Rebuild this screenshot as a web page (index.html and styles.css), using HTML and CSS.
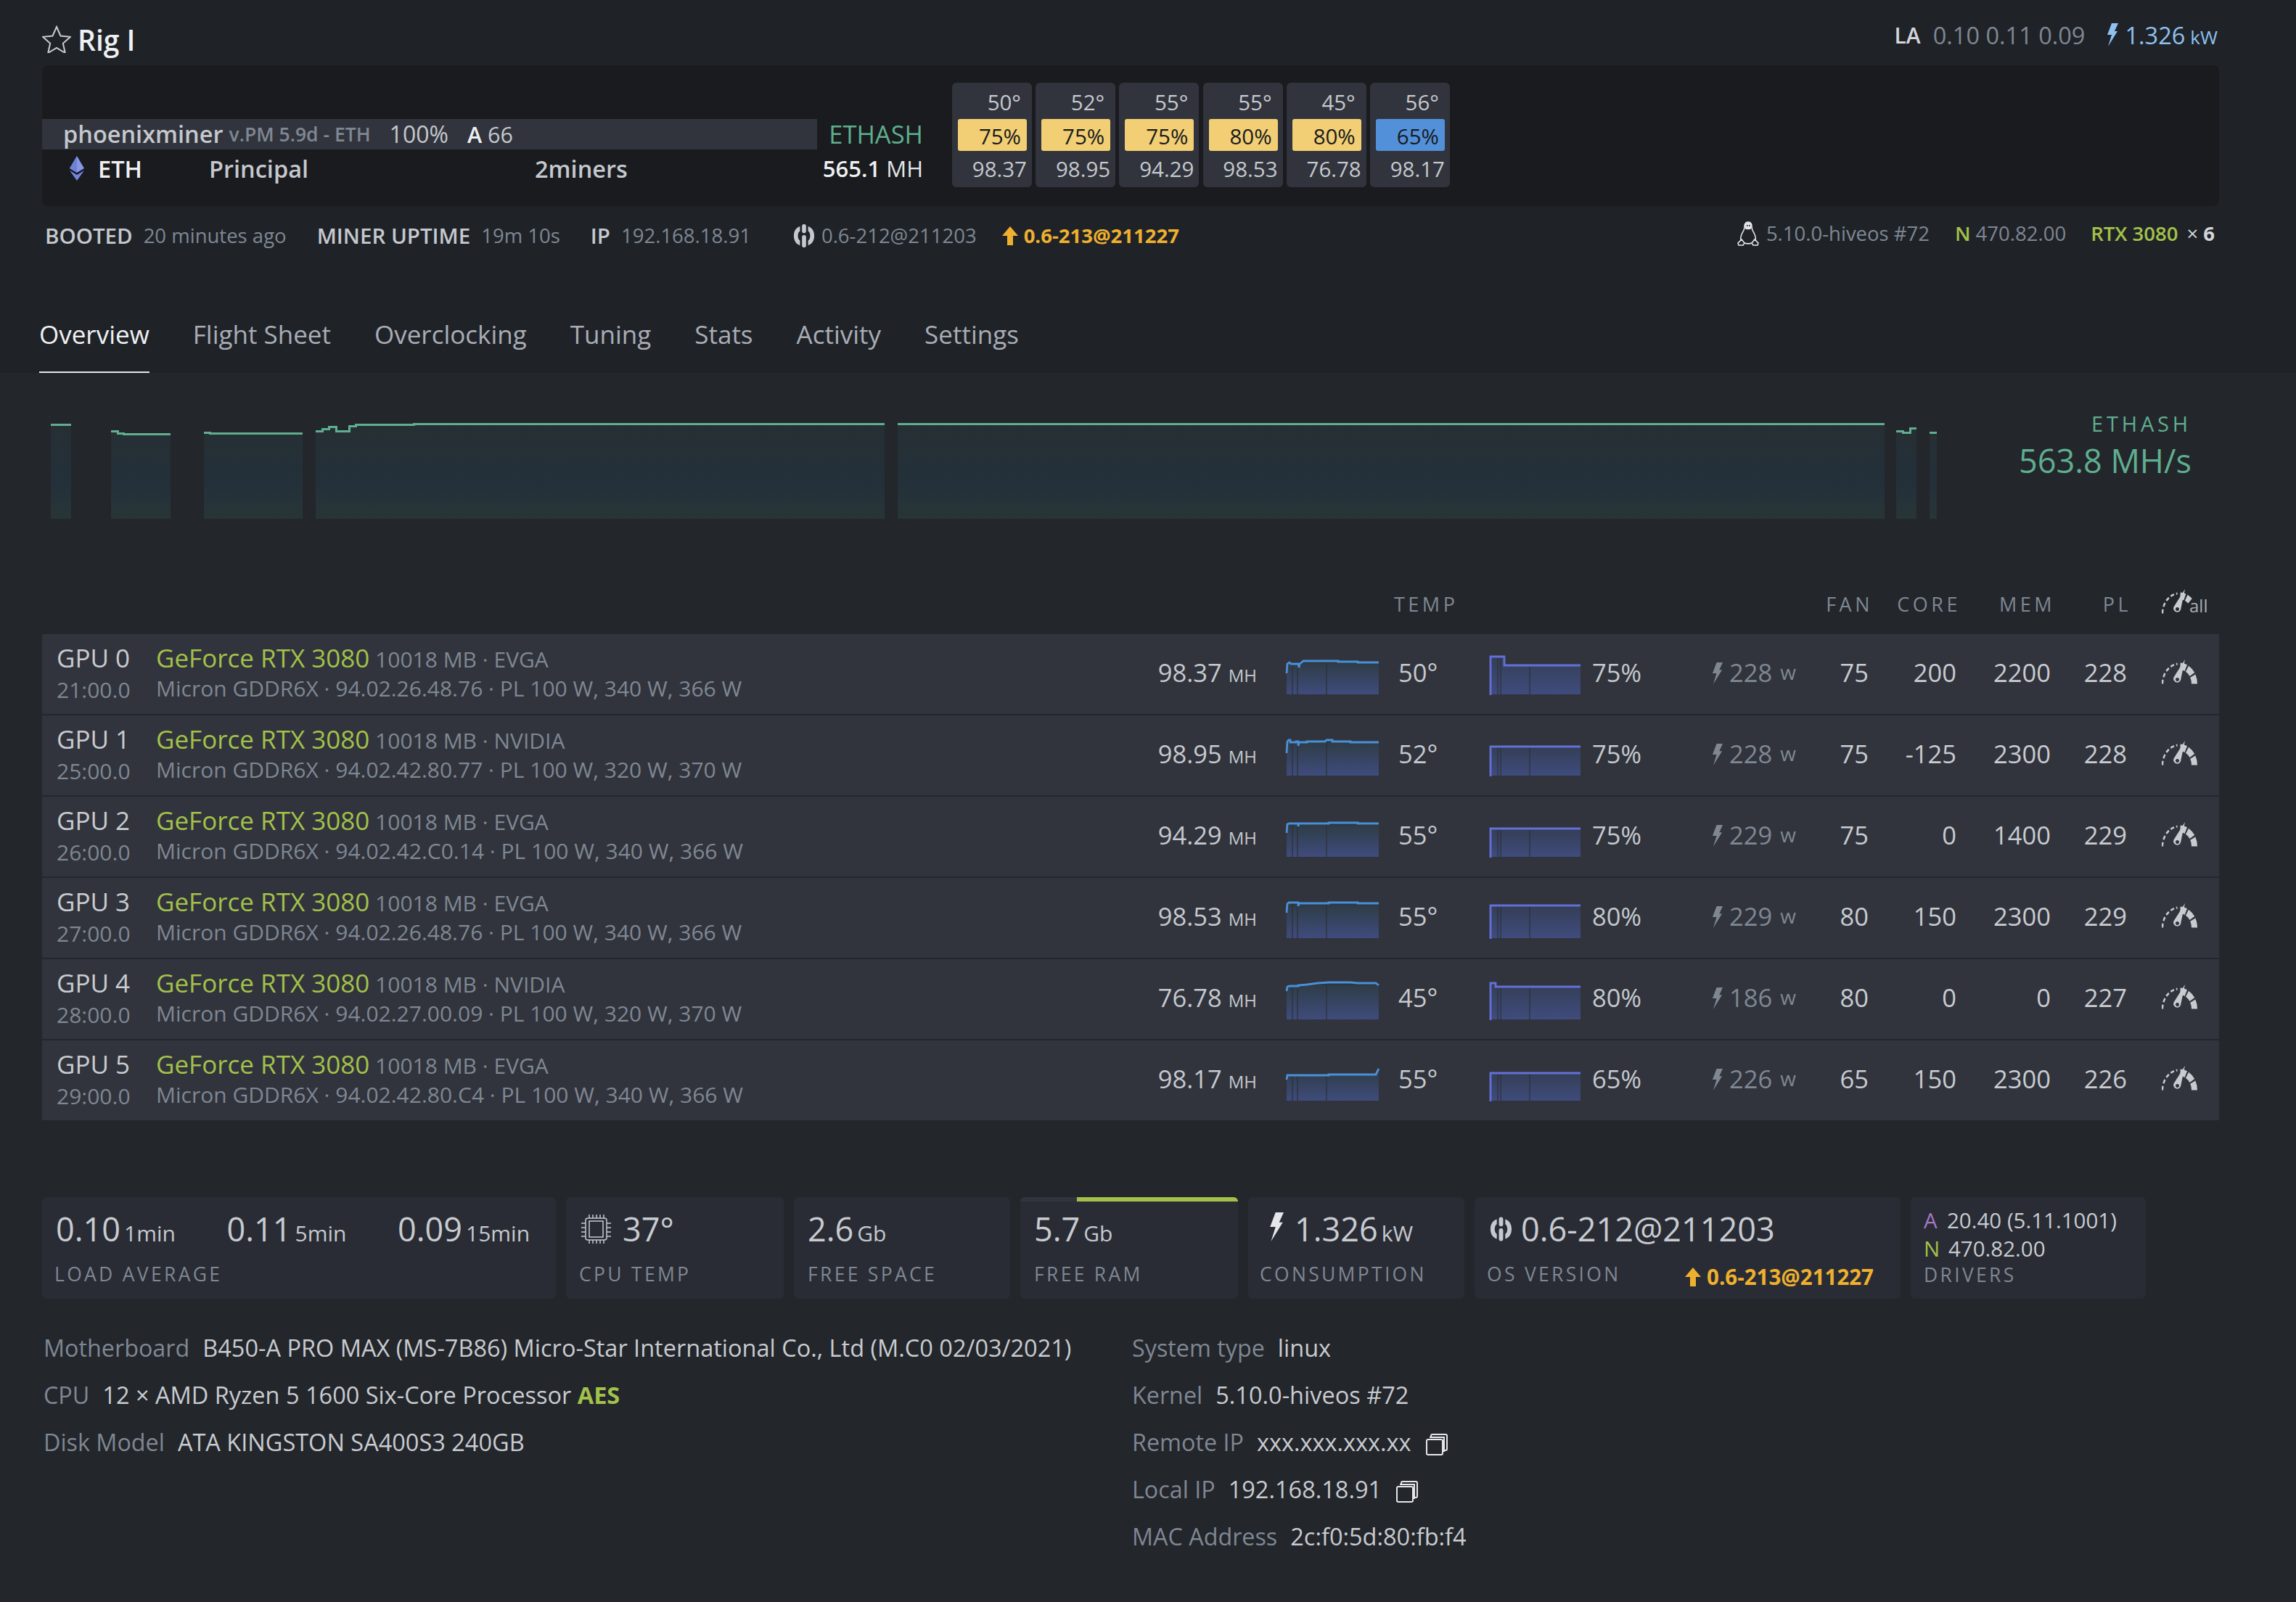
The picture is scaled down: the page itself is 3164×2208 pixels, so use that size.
FILE: index.html
```html
<!DOCTYPE html>
<html lang="en">
<head>
<meta charset="utf-8">
<title>Rig I</title>
<link rel="stylesheet" href="styles.css">
</head>
<body>
<svg class="defs" width="0" height="0" aria-hidden="true">
  <defs>
    <linearGradient id="gh" x1="0" y1="0" x2="0" y2="1"><stop offset="0" stop-color="#27313a"/><stop offset="0.1" stop-color="#2f3d49"/><stop offset="1" stop-color="#3f4c7d"/></linearGradient>
    <linearGradient id="gf" x1="0" y1="0" x2="0" y2="1"><stop offset="0" stop-color="#343e56"/><stop offset="1" stop-color="#3f4c7d"/></linearGradient>
    <linearGradient id="gc" x1="0" y1="0" x2="0" y2="1"><stop offset="0" stop-color="#262f33"/><stop offset="0.62" stop-color="#23303a"/><stop offset="1" stop-color="#283537"/></linearGradient>
    <symbol id="bolt" viewBox="0 0 16 32"><path d="M7 0h9l-5 11h4L2 32l5-16H1z"/></symbol>
    <symbol id="hive" viewBox="0 0 32 34"><path d="M10 3C4 5 1 10 1 17s3 12 9 14v-7c-2-1-3-4-3-7s1-6 3-7zM22 3c6 2 9 7 9 14s-3 12-9 14v-7c2-1 3-4 3-7s-1-6-3-7z"/><rect x="13" y="0" width="6" height="13" rx="3"/><rect x="13" y="16" width="6" height="18" rx="3"/></symbol>
    <symbol id="arrow" viewBox="0 0 24 26"><path d="M12 0l11 13h-7v13H8V13H1z"/></symbol>
    <symbol id="gauge" viewBox="0 0 49 34">
      <g transform="translate(24.500 33.500) scale(1 1.180)" fill="none" stroke="currentColor">
        <path d="M-23.500 0A23.500 23.500 0 0 1-3-23.300" stroke-width="2.400" stroke-dasharray="5 3"/>
        <path d="M20.500 0A20.500 20.500 0 0 0 1-20.500" stroke-width="8" stroke-dasharray="9.500 2"/>
      </g>
      <path fill-rule="evenodd" d="M32 0L26.500 26A5.200 5.200 0 1 1 16.500 24.500ZM21.500 25a2.500 2.500 0 1 0 .01 0z"/>
    </symbol>
    <symbol id="gauge-all" viewBox="0 0 49 34">
      <g transform="translate(24.500 33.500) scale(1 1.180)" fill="none" stroke="currentColor">
        <path d="M-23.500 0A23.500 23.500 0 0 1-3-23.300" stroke-width="2.400" stroke-dasharray="5 3"/>
        <path d="M14.500 -14.500A20.500 20.500 0 0 0 1-20.500" stroke-width="8" stroke-dasharray="6.500 2"/>
      </g>
      <path fill-rule="evenodd" d="M32 0L26.500 26A5.200 5.200 0 1 1 16.500 24.500ZM21.500 25a2.500 2.500 0 1 0 .01 0z"/>
    </symbol>
    <symbol id="copy" viewBox="0 0 30 30"><rect x="1" y="8" width="22" height="21" rx="2" fill="none" stroke="currentColor" stroke-width="2"/><path d="M7 4V3a2 2 0 0 1 2-2h18a2 2 0 0 1 2 2v18a2 2 0 0 1-2 2h-1" fill="none" stroke="currentColor" stroke-width="2"/><path d="M5 5h20v20" fill="none" stroke="currentColor" stroke-width="2"/></symbol>
  </defs>
</svg>

<header class="head">
  <div class="topbar">
    <div class="title">
      <svg class="star" viewBox="0 0 40 38"><path d="M20 2l5.500 12.500 13.500 1.300-10.200 9 3 13.200L20 31l-11.800 7 3-13.200L1 15.800l13.500-1.300z" fill="none" stroke="#c8cbd0" stroke-width="2"/></svg>
      <span>Rig I</span>
    </div>
    <div class="top-right">
      <b class="la">LA</b>
      <span class="muted">0.10 0.11 0.09</span>
      <svg class="bolt-top"><use href="#bolt"/></svg>
      <span class="power-top">1.326<small>kW</small></span>
    </div>
  </div>

  <section class="panel">
    <div class="miner">
      <div class="miner-band">
        <b class="miner-name">phoenixminer</b>
        <span class="miner-ver">v.PM 5.9d - ETH</span>
        <span class="miner-pct">100%</span>
        <span class="miner-acc"><b>A</b> 66</span>
      </div>
      <div class="miner-coin">
        <svg class="eth" viewBox="0 0 22 34"><path d="M11 0L1 17l10 6 10-6z" fill="#8797e6"/><path d="M11 0L1 17l10 6z" fill="#6f80d8"/><path d="M1 20l10 14 10-14-10 6z" fill="#7485de"/></svg>
        <b class="coin-name">ETH</b>
        <span class="coin-wallet">Principal</span>
        <span class="coin-pool">2miners</span>
      </div>
    </div>
    <div class="algo">
      <div class="algo-name">ETHASH</div>
      <div class="algo-rate"><b>565.1</b> <span>MH</span></div>
    </div>
    <div class="cards">
      <div class="card"><span class="card-t">50°</span><span class="card-f warm">75%</span><span class="card-h">98.37</span></div>
      <div class="card"><span class="card-t">52°</span><span class="card-f warm">75%</span><span class="card-h">98.95</span></div>
      <div class="card"><span class="card-t">55°</span><span class="card-f warm">75%</span><span class="card-h">94.29</span></div>
      <div class="card"><span class="card-t">55°</span><span class="card-f warm">80%</span><span class="card-h">98.53</span></div>
      <div class="card"><span class="card-t">45°</span><span class="card-f warm">80%</span><span class="card-h">76.78</span></div>
      <div class="card"><span class="card-t">56°</span><span class="card-f cool">65%</span><span class="card-h">98.17</span></div>
    </div>
  </section>

  <div class="meta">
    <div class="meta-left">
      <b class="k">BOOTED</b><span class="v g1">20 minutes ago</span>
      <b class="k">MINER UPTIME</b><span class="v g1">19m 10s</span>
      <b class="k">IP</b><span class="v g2">192.168.18.91</span>
      <svg class="hive-s"><use href="#hive"/></svg><span class="v g3">0.6-212@211203</span>
      <svg class="arrow-s"><use href="#arrow"/></svg><b class="update">0.6-213@211227</b>
    </div>
    <div class="meta-right">
      <svg class="tux" viewBox="0 0 30 34"><path d="M15 1c-4 0-5 3-5 7 0 3-1 5-3 8-2 4-3 7-2 10 1 2 3 3 5 4 3 1 7 1 10 0 2-1 4-2 5-4 1-3 0-6-2-10-2-3-3-5-3-8 0-4-1-7-5-7z" fill="#1f2328" stroke="#e4e6e9" stroke-width="1.600"/><path d="M11 2.500c1-1.500 7-1.500 8 0 1 2 1 6 0 8-2 1-6 1-8 0-1-2-1-6 0-8z" fill="#e4e6e9"/><path d="M13 5h1.500v2H13zM16 5h1.500v2H16z" fill="#1f2328"/><path d="M1 30l5-5 4 5-2 3-6 0zM29 30l-5-5-4 5 2 3 6 0z" fill="#1f2328" stroke="#e4e6e9" stroke-width="1.600"/></svg>
      <span class="v g4">5.10.0-hiveos #72</span>
      <span class="green n-tag">N</span><span class="v g5">470.82.00</span>
      <span class="green rtx">RTX 3080</span><b class="times"><small>×</small> 6</b>
    </div>
  </div>

  <nav class="tabs">
    <a class="tab active">Overview</a>
    <a class="tab">Flight Sheet</a>
    <a class="tab">Overclocking</a>
    <a class="tab">Tuning</a>
    <a class="tab">Stats</a>
    <a class="tab">Activity</a>
    <a class="tab">Settings</a>
  </nav>
</header>

<main class="main">
  <section class="chart-row">
    <svg class="chart" viewBox="0 0 2640 136" width="2640" height="136">
      <path fill="url(#gc)" d="M12 5H40V135H12zM95 14H104V17H112V18H177V135H95zM223 16H231V17H359V135H223zM377 14H386V11H395V8H405V14H423V7H432V5H512V4H1161V135H377zM1179 4H2539V135H1179zM2555 14H2564V16H2574V10H2583V135H2555zM2601 16H2611V135H2601z"/>
      <path fill="none" stroke="#5fae8f" stroke-width="3" shape-rendering="crispEdges" d="M12 5H40M95 14H104V17H112V18H177M223 16H231V17H359M377 14H386V11H395V8H405V14H423V7H432V5H512V4H1161M1179 4H2539M2555 14H2564V16H2574V10H2583M2601 16H2611"/>
    </svg>
    <div class="chart-info">
      <div class="chart-algo">ETHASH</div>
      <div class="chart-rate">563.8 MH/s</div>
    </div>
  </section>

  <section class="gpus">
    <div class="gpu-head grid">
      <span class="h-temp">TEMP</span>
      <span class="h-fan">FAN</span>
      <span class="h-core">CORE</span>
      <span class="h-mem">MEM</span>
      <span class="h-pl">PL</span>
      <span class="h-all"><svg class="gauge"><use href="#gauge-all"/></svg><small>all</small></span>
    </div>

    <div class="gpu grid">
      <div class="gpu-id"><div class="gid">GPU 0</div><div class="bus">21:00.0</div></div>
      <div class="gpu-info"><div><span class="model">GeForce RTX 3080</span> <span class="sub">10018 MB · EVGA</span></div><div class="sub">Micron GDDR6X · 94.02.26.48.76 · PL 100 W, 340 W, 366 W</div></div>
      <div class="hash">98.37 <small>MH</small></div>
      <div class="c-spark1"><svg class="spark" viewBox="0 0 130 54"><path fill="url(#gh)" d="M2 24L3 11L6 9L8 11H18L19 16L20 11L24 8L25 7H73V8H100V9H129V53H2z"/><path class="gaps" d="M10 12V53M17 12V53M57 8V53"/><path class="lh" d="M2 24L3 11L6 9L8 11H18L19 16L20 11L24 8L25 7H73V8H100V9H129"/></svg></div>
      <div class="temp">50°</div>
      <div class="c-spark2"><svg class="spark" viewBox="0 0 130 54"><path fill="url(#gf)" d="M3 1H22V13H127V53H3z"/><path class="gaps" d="M13 3V53M17 3V53M57 13V53"/><path class="lf" d="M3 54V1H22V13H127"/></svg></div>
      <div class="fan">75%</div>
      <div class="power"><svg class="bolt-w"><use href="#bolt"/></svg><span>228</span><small>w</small></div>
      <div class="n f">75</div><div class="n c">200</div><div class="n m">2200</div><div class="n p">228</div>
      <div class="g"><svg class="gauge"><use href="#gauge"/></svg></div>
    </div>

    <div class="gpu grid">
      <div class="gpu-id"><div class="gid">GPU 1</div><div class="bus">25:00.0</div></div>
      <div class="gpu-info"><div><span class="model">GeForce RTX 3080</span> <span class="sub">10018 MB · NVIDIA</span></div><div class="sub">Micron GDDR6X · 94.02.42.80.77 · PL 100 W, 320 W, 370 W</div></div>
      <div class="hash">98.95 <small>MH</small></div>
      <div class="c-spark1"><svg class="spark" viewBox="0 0 130 54"><path fill="url(#gh)" d="M2 22L3 6L5 4H7V7H15V6H18V12L19 7H30V6H55L57 4H65V6H90V7H129V53H2z"/><path class="gaps" d="M10 8V53M17 8V53M57 6V53"/><path class="lh" d="M2 22L3 6L5 4H7V7H15V6H18V12L19 7H30V6H55L57 4H65V6H90V7H129"/></svg></div>
      <div class="temp">52°</div>
      <div class="c-spark2"><svg class="spark" viewBox="0 0 130 54"><path fill="url(#gf)" d="M3 13H127V53H3z"/><path class="gaps" d="M13 14V53M17 14V53M57 14V53"/><path class="lf" d="M3 54V13H127"/></svg></div>
      <div class="fan">75%</div>
      <div class="power"><svg class="bolt-w"><use href="#bolt"/></svg><span>228</span><small>w</small></div>
      <div class="n f">75</div><div class="n c">-125</div><div class="n m">2300</div><div class="n p">228</div>
      <div class="g"><svg class="gauge"><use href="#gauge"/></svg></div>
    </div>

    <div class="gpu grid">
      <div class="gpu-id"><div class="gid">GPU 2</div><div class="bus">26:00.0</div></div>
      <div class="gpu-info"><div><span class="model">GeForce RTX 3080</span> <span class="sub">10018 MB · EVGA</span></div><div class="sub">Micron GDDR6X · 94.02.42.C0.14 · PL 100 W, 340 W, 366 W</div></div>
      <div class="hash">94.29 <small>MH</small></div>
      <div class="c-spark1"><svg class="spark" viewBox="0 0 130 54"><path fill="url(#gh)" d="M2 20L3 8L6 7H18V11L19 7H60V6H100V7H129V53H2z"/><path class="gaps" d="M10 8V53M17 8V53M57 8V53"/><path class="lh" d="M2 20L3 8L6 7H18V11L19 7H60V6H100V7H129"/></svg></div>
      <div class="temp">55°</div>
      <div class="c-spark2"><svg class="spark" viewBox="0 0 130 54"><path fill="url(#gf)" d="M3 14H127V53H3z"/><path class="gaps" d="M13 15V53M17 15V53M57 15V53"/><path class="lf" d="M3 54V14H127"/></svg></div>
      <div class="fan">75%</div>
      <div class="power"><svg class="bolt-w"><use href="#bolt"/></svg><span>229</span><small>w</small></div>
      <div class="n f">75</div><div class="n c">0</div><div class="n m">1400</div><div class="n p">229</div>
      <div class="g"><svg class="gauge"><use href="#gauge"/></svg></div>
    </div>

    <div class="gpu grid">
      <div class="gpu-id"><div class="gid">GPU 3</div><div class="bus">27:00.0</div></div>
      <div class="gpu-info"><div><span class="model">GeForce RTX 3080</span> <span class="sub">10018 MB · EVGA</span></div><div class="sub">Micron GDDR6X · 94.02.26.48.76 · PL 100 W, 340 W, 366 W</div></div>
      <div class="hash">98.53 <small>MH</small></div>
      <div class="c-spark1"><svg class="spark" viewBox="0 0 130 54"><path fill="url(#gh)" d="M2 18L3 6L5 4H18V9L19 5H60V4H100V5H129V53H2z"/><path class="gaps" d="M10 6V53M17 6V53M57 6V53"/><path class="lh" d="M2 18L3 6L5 4H18V9L19 5H60V4H100V5H129"/></svg></div>
      <div class="temp">55°</div>
      <div class="c-spark2"><svg class="spark" viewBox="0 0 130 54"><path fill="url(#gf)" d="M3 8H127V53H3z"/><path class="gaps" d="M13 9V53M17 9V53M57 9V53"/><path class="lf" d="M3 54V8H127"/></svg></div>
      <div class="fan">80%</div>
      <div class="power"><svg class="bolt-w"><use href="#bolt"/></svg><span>229</span><small>w</small></div>
      <div class="n f">80</div><div class="n c">150</div><div class="n m">2300</div><div class="n p">229</div>
      <div class="g"><svg class="gauge"><use href="#gauge"/></svg></div>
    </div>

    <div class="gpu grid">
      <div class="gpu-id"><div class="gid">GPU 4</div><div class="bus">28:00.0</div></div>
      <div class="gpu-info"><div><span class="model">GeForce RTX 3080</span> <span class="sub">10018 MB · NVIDIA</span></div><div class="sub">Micron GDDR6X · 94.02.27.00.09 · PL 100 W, 320 W, 370 W</div></div>
      <div class="hash">76.78 <small>MH</small></div>
      <div class="c-spark1"><svg class="spark" viewBox="0 0 130 54"><path fill="url(#gh)" d="M2 14L3 8L6 7H18V6L30 5L45 3L60 2H90L100 3H125L129 6V53H2z"/><path class="gaps" d="M10 9V53M17 9V53M57 5V53"/><path class="lh" d="M2 14L3 8L6 7H18V6L30 5L45 3L60 2H90L100 3H125L129 6"/></svg></div>
      <div class="temp">45°</div>
      <div class="c-spark2"><svg class="spark" viewBox="0 0 130 54"><path fill="url(#gf)" d="M3 3H10V8H127V53H3z"/><path class="gaps" d="M13 9V53M17 9V53M57 9V53"/><path class="lf" d="M3 54V3H10V8H127"/></svg></div>
      <div class="fan">80%</div>
      <div class="power"><svg class="bolt-w"><use href="#bolt"/></svg><span>186</span><small>w</small></div>
      <div class="n f">80</div><div class="n c">0</div><div class="n m">0</div><div class="n p">227</div>
      <div class="g"><svg class="gauge"><use href="#gauge"/></svg></div>
    </div>

    <div class="gpu grid">
      <div class="gpu-id"><div class="gid">GPU 5</div><div class="bus">29:00.0</div></div>
      <div class="gpu-info"><div><span class="model">GeForce RTX 3080</span> <span class="sub">10018 MB · EVGA</span></div><div class="sub">Micron GDDR6X · 94.02.42.80.C4 · PL 100 W, 340 W, 366 W</div></div>
      <div class="hash">98.17 <small>MH</small></div>
      <div class="c-spark1"><svg class="spark" viewBox="0 0 130 54"><path fill="url(#gh)" d="M2 24L3 18H60V17H125L126 15L129 9V53H2z"/><path class="gaps" d="M10 19V53M17 19V53M57 19V53"/><path class="lh" d="M2 24L3 18H60V17H125L126 15L129 9"/></svg></div>
      <div class="temp">55°</div>
      <div class="c-spark2"><svg class="spark" viewBox="0 0 130 54"><path fill="url(#gf)" d="M3 15H127V53H3z"/><path class="gaps" d="M13 16V53M17 16V53M57 16V53"/><path class="lf" d="M3 54V15H127"/></svg></div>
      <div class="fan">65%</div>
      <div class="power"><svg class="bolt-w"><use href="#bolt"/></svg><span>226</span><small>w</small></div>
      <div class="n f">65</div><div class="n c">150</div><div class="n m">2300</div><div class="n p">226</div>
      <div class="g"><svg class="gauge"><use href="#gauge"/></svg></div>
    </div>
  </section>

  <section class="stats">
    <div class="stat s-load">
      <div class="val">
        <span class="load"><b>0.10</b><small>1min</small></span>
        <span class="load"><b>0.11</b><small>5min</small></span>
        <span class="load"><b>0.09</b><small>15min</small></span>
      </div>
      <div class="lab">LOAD AVERAGE</div>
    </div>
    <div class="stat s-cpu">
      <div class="val">
        <svg class="chip" viewBox="0 0 43 42"><g fill="none" stroke="#c5c8ce" stroke-width="1.500"><rect x="7" y="6" width="29" height="30" rx="3"/><rect x="12" y="10" width="19" height="22"/><path d="M12 1v5M17 1v5M22 1v5M27 1v5M32 1v5M12 36v5M17 36v5M22 36v5M27 36v5M32 36v5M1 13h6M1 19h6M1 25h6M1 31h6M36 13h6M36 19h6M36 25h6M36 31h6"/></g></svg>
        <b>37°</b>
      </div>
      <div class="lab">CPU TEMP</div>
    </div>
    <div class="stat s-disk">
      <div class="val"><b>2.6</b><small>Gb</small></div>
      <div class="lab">FREE SPACE</div>
    </div>
    <div class="stat s-ram">
      <div class="ram-bar"><div class="ram-used"></div></div>
      <div class="val"><b>5.7</b><small>Gb</small></div>
      <div class="lab">FREE RAM</div>
    </div>
    <div class="stat s-pow">
      <div class="val"><svg class="bolt-stat"><use href="#bolt"/></svg><b>1.326</b><small>kW</small></div>
      <div class="lab">CONSUMPTION</div>
    </div>
    <div class="stat s-os">
      <div class="val"><svg class="hive-l"><use href="#hive"/></svg><b>0.6-212@211203</b></div>
      <div class="os-foot">
        <div class="lab">OS VERSION</div>
        <div class="os-up"><svg class="arrow-s"><use href="#arrow"/></svg><b class="update">0.6-213@211227</b></div>
      </div>
    </div>
    <div class="stat s-drv">
      <div class="drv"><span class="tag-a">A</span>20.40 (5.11.1001)</div>
      <div class="drv"><span class="tag-n">N</span>470.82.00</div>
      <div class="lab">DRIVERS</div>
    </div>
  </section>

  <section class="details">
    <div class="d-col d-left">
      <div class="d"><span class="dk">Motherboard</span><span class="dv">B450-A PRO MAX (MS-7B86) Micro-Star International Co., Ltd (M.C0 02/03/2021)</span></div>
      <div class="d"><span class="dk">CPU</span><span class="dv">12 × AMD Ryzen 5 1600 Six-Core Processor <b class="aes">AES</b></span></div>
      <div class="d"><span class="dk">Disk Model</span><span class="dv">ATA KINGSTON SA400S3 240GB</span></div>
    </div>
    <div class="d-col">
      <div class="d"><span class="dk">System type</span><span class="dv">linux</span></div>
      <div class="d"><span class="dk">Kernel</span><span class="dv">5.10.0-hiveos #72</span></div>
      <div class="d"><span class="dk">Remote IP</span><span class="dv">xxx.xxx.xxx.xx</span><svg class="copy"><use href="#copy"/></svg></div>
      <div class="d"><span class="dk">Local IP</span><span class="dv">192.168.18.91</span><svg class="copy"><use href="#copy"/></svg></div>
      <div class="d"><span class="dk">MAC Address</span><span class="dv">2c:f0:5d:80:fb:f4</span></div>
    </div>
  </section>
</main>
</body>
</html>
```

FILE: styles.css
```css
* { box-sizing: border-box; }
html, body { margin: 0; padding: 0; }
body {
  width: 3164px;
  height: 2208px;
  background: #23262b;
  color: #c5c8ce;
  font-family: "Open Sans", "Liberation Sans", sans-serif;
  font-size: 30px;
  overflow: hidden;
}
small { font-size: inherit; }
.defs { position: absolute; }
.muted { color: #7f8793; }
.green { color: #a3c14a; }

.head { background: #1f2328; height: 514px; }

.topbar {
  height: 90px;
  padding: 18px 108px 0 58px;
  display: flex;
  justify-content: space-between;
  align-items: center;
}
.title { display: flex; align-items: center; gap: 9px; font-size: 39px; font-weight: 600; color: #eef0f2; }
.star { width: 40px; height: 38px; }
.top-right { display: flex; align-items: center; font-size: 32.500px; margin-top: -12px; }
.la { color: #d4d6da; font-weight: 600; font-size: 30px; margin-right: 17px; }
.bolt-top { width: 16px; height: 32px; fill: #8fc1f0; margin: 0 9px 0 30px; }
.power-top { color: #8fc1f0; }
.power-top small { font-size: 26px; margin-left: 7px; }

.panel {
  margin-left: 58px;
  width: 3000px;
  height: 194px;
  background: #191b1e;
  border-radius: 8px;
  display: flex;
}
.miner { width: 1068px; padding-top: 74px; }
.miner-band {
  height: 42px;
  background: #31343c;
  padding-left: 29px;
  display: flex;
  align-items: center;
  font-size: 32px;
  line-height: 42px;
  white-space: nowrap;
}
.miner-name { font-weight: 600; font-size: 32.500px; color: #c5c8ce; }
.miner-ver { font-size: 26.500px; color: #7f8793; margin-left: 8px; font-weight: 600; }
.miner-pct { margin-left: 26px; font-size: 32px; }
.miner-acc { margin-left: 26px; font-size: 30.500px; }
.miner-acc b { color: #eef0f2; font-weight: 600; }
.miner-coin { display: flex; align-items: center; height: 52px; padding-left: 37px; font-size: 32.500px; font-weight: 600; white-space: nowrap; }
.eth { width: 22px; height: 34px; }
.coin-name { margin-left: 18px; color: #eef0f2; font-weight: 600; width: 153px; }
.coin-wallet { width: 449px; color: #c5c8ce; }
.coin-pool { color: #c5c8ce; }

.algo { width: 146px; padding-top: 74px; text-align: right; white-space: nowrap; }
.algo-name { color: #5fae8f; font-size: 34.500px; line-height: 42px; }
.algo-rate { line-height: 52px; font-size: 31px; color: #e4e6e9; }
.algo-rate b { font-weight: 600; color: #eef0f2; }

.cards { display: flex; gap: 5.200px; margin: 24px 0 0 40px; height: 144px; }
.card {
  width: 110px;
  height: 144px;
  background: #31343c;
  border-radius: 6px;
  padding: 0 7px 0 8px;
  display: flex;
  flex-direction: column;
  font-size: 29.500px;
  text-align: right;
}
.card-t { height: 50px; line-height: 53px; padding-right: 8px; }
.card-f {
  height: 44px;
  line-height: 48px;
  border-radius: 3px;
  color: #191b1e;
  padding-right: 8px;
}
.warm { background: #f2cf74; }
.cool { background: #5290d9; }
.card-h { height: 50px; line-height: 50px; }

.meta {
  height: 128px;
  padding: 20px 112px 0 62px;
  display: flex;
  justify-content: space-between;
  font-size: 27.500px;
  line-height: 40px;
  white-space: nowrap;
}
.meta-left, .meta-right { display: flex; align-items: center; height: 40px; }
.meta-left { margin-top: 1px; }
.meta-right { margin-top: -2px; }
.k { color: #c5c8ce; font-weight: 600; font-size: 29.500px; }
.v { color: #7f8793; }
.g1 { margin: 0 42px 0 15px; }
.g2 { margin: 0 58px 0 15px; }
.g3 { margin: 0 34px 0 9px; }
.g4 { margin: 0 35px 0 10px; }
.g5 { margin: 0 34px 0 7px; }
.hive-s { width: 30px; height: 34px; fill: #c5c8ce; }
.arrow-s { width: 24px; height: 26px; fill: #eeb02e; margin-right: 7px; }
.update { color: #eeb02e; font-weight: 700; }
.tux { width: 30px; height: 34px; }
.n-tag { font-weight: 600; }
.rtx { font-weight: 600; }
.times { color: #d4d6da; font-weight: 700; margin-left: 12px; }
.times small { font-weight: 400; }

.tabs { display: flex; gap: 60px; padding-left: 54px; height: 102px; font-size: 35px; }
.tab { height: 102px; padding-top: 24px; line-height: 50px; color: #a9adb5; border-bottom: 2px solid transparent; }
.tab.active { color: #f0f1f3; border-bottom-color: #e4e6e9; }

.chart-row { display: flex; padding: 66px 0 0 58px; height: 202px; }
.chart { display: block; flex: none; }
.chart-info { width: 360px; margin-top: -14px; padding-right: 38px; text-align: right; color: #5fae8f; }
.chart-algo { font-size: 29px; letter-spacing: 4.800px; line-height: 36px; }
.chart-rate { font-size: 45px; line-height: 66px; }

.gpus { margin: 80px 0 0 58px; width: 3000px; }
.grid {
  display: grid;
  grid-template-columns: 137px 1fr 138px 168px 151px 127px 100px 200px 97px 121px 130px 105px 127px;
  padding-left: 20px;
  align-items: center;
}
.gpu-head { height: 78px; padding-bottom: 4px; font-size: 27px; letter-spacing: 4.500px; color: #7f8793; line-height: 40px; }
.h-temp { grid-column: 5; padding-left: 21px; }
.h-fan, .h-core, .h-mem, .h-pl { margin-right: -6px; text-align: right; }
.h-fan { grid-column: 9; }
.h-core { grid-column: 10; }
.h-mem { grid-column: 11; }
.h-pl { grid-column: 12; }
.h-all { grid-column: 13; padding-left: 48px; display: flex; align-items: flex-end; letter-spacing: 0; color: #c8cbd0; }
.h-all .gauge { margin-top: -8px; }
.h-all small { font-size: 24px; line-height: 22px; margin-left: -11px; color: #a9adb5; }

.gpu { height: 110px; background: #31343c; font-size: 34.500px; white-space: nowrap; margin-bottom: 2px; }
.gpu:last-child { margin-bottom: 0; }
.gpu-id { line-height: 44px; font-size: 30px; }
.gpu-info { line-height: 40px; padding-bottom: 2px; font-size: 30px; }
.gid { font-size: 35px; color: #c8cbd0; }
.bus { color: #7f8793; }
.model { font-size: 35px; color: #a3c14a; }
.sub { color: #7f8793; font-size: 30px; }
.hash, .temp, .fan, .power, .n, .g { margin-bottom: 6px; }
.hash { text-align: right; }
.hash small { font-size: 24px; color: #c5c8ce; }
.c-spark1 { padding-left: 39px; }
.spark { display: block; width: 130px; height: 54px; margin-top: 4px; overflow: visible; }
.lh { fill: none; stroke: #4a90d9; stroke-width: 2.800; }
.lf { fill: none; stroke: #6470d8; stroke-width: 2.800; }
.gaps { fill: none; stroke: #2d3038; stroke-width: 1.200; }
.temp { padding-left: 27px; }
.fan { padding-left: 16px; }
.power { padding-left: 81px; display: flex; align-items: center; color: #7f8793; }
.power span { margin-left: 9px; }
.power small { font-size: 28px; margin-left: 11px; }
.bolt-w { width: 15px; height: 30px; fill: #7f8793; margin-top: 4px; }
.n { text-align: right; color: #c8cbd0; }
.g { padding-left: 48px; display: flex; }
.gauge { width: 49px; height: 34px; fill: #c8cbd0; color: #c8cbd0; flex: none; }

.stats { display: flex; gap: 14px; margin: 106px 0 0 58px; height: 140px; }
.stat { background: #292c34; border-radius: 6px; height: 140px; padding: 14px 0 0 17px; position: relative; white-space: nowrap; }
.val { height: 60px; display: flex; align-items: baseline; font-size: 45px; line-height: 60px; }
.val b { font-weight: 400; color: #c8cbd0; }
.val small { font-size: 30px; margin-left: 5px; }
.lab { font-size: 26.500px; letter-spacing: 3.300px; color: #7f8793; line-height: 36px; margin-top: 14px; }
.s-load { width: 708px; }
.load { width: 235.500px; flex: none; display: flex; align-items: baseline; padding-left: 2px; }
.s-cpu { width: 300px; padding-left: 18px; }
.chip { width: 43px; height: 42px; align-self: center; margin: 0 15px 0 2px; }
.s-disk { width: 298px; padding-left: 19px; }
.s-ram { width: 300px; padding-left: 19px; }
.ram-bar { position: absolute; left: 0; top: 0; width: 100%; height: 6px; background: #31343c; border-radius: 6px 6px 0 0; overflow: hidden; }
.ram-used { margin-left: 26%; height: 6px; background: #a3c14a; }
.s-pow { width: 298px; padding-left: 16px; }
.bolt-stat { width: 20px; height: 40px; fill: #e4e6e9; align-self: center; margin: -6px 15px 0 13px; }
.s-os { width: 587px; }
.hive-l { width: 31px; height: 34px; fill: #c5c8ce; align-self: center; margin: 0 12px 0 4px; }
.os-foot { display: flex; justify-content: space-between; padding-right: 37px; align-items: flex-start; }
.os-up { display: flex; align-items: center; font-size: 29.500px; line-height: 40px; margin-top: 16px; }
.s-drv { width: 324px; padding: 12px 0 0 18px; font-size: 29.500px; }
.drv { line-height: 39px; height: 39px; display: flex; color: #c8cbd0; }
.tag-a { color: #a578c4; width: 32px; }
.tag-n { color: #a3c14a; width: 34px; }
.s-drv .lab { margin-top: -1px; }

.details { display: flex; margin: 35px 0 0 60px; font-size: 32.500px; line-height: 65px; white-space: nowrap; }
.d-col { flex: none; }
.d-left { width: 1500px; }
.d { display: flex; align-items: center; height: 65px; }
.dk { color: #7f8793; margin-right: 18px; font-size: 32.300px; }
.dv { color: #c8cbd0; }
.aes { color: #a3c14a; font-weight: 700; }
.copy { width: 30px; height: 30px; color: #e4e6e9; margin: 6px 0 0 20px; }
```
